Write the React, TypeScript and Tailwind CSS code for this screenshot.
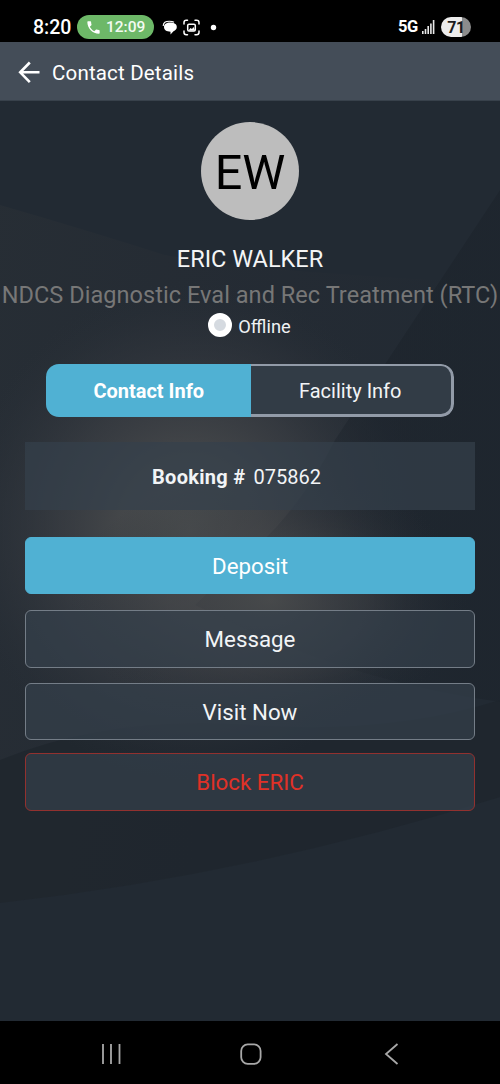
import type { ReactNode } from "react";

const StatusBar = () => {
  return (
    <div className="h-[42px] shrink-0 bg-black flex items-start pt-[15px] pl-[33px] pr-[29px] text-white">
      <div className="h-6 flex items-center w-[38px] text-[19.5px] font-medium whitespace-nowrap pt-[1px]">
        8:20
      </div>
      <div className="h-6 w-[77px] ml-[6px] rounded-full bg-[#6db868] flex items-center pl-[10px]">
        <svg className="w-[13px] h-[13px]" viewBox="2.5 2.5 19 19" fill="white">
          <path d="M6.600 10.800c1.400 2.800 3.800 5.100 6.600 6.600l2.200-2.200c.3-.3.7-.4 1-.2 1.100.4 2.300.6 3.600.6.600 0 1 .4 1 1V20c0 .6-.4 1-1 1C10.600 21 3 13.400 3 4c0-.6.4-1 1-1h3.500c.6 0 1 .4 1 1 0 1.300.2 2.500.6 3.600.1.300 0 .7-.2 1z" />
        </svg>
        <span className="ml-[6px] text-[15.5px] font-medium leading-6 text-[#f3fbf2]">12:09</span>
      </div>
      <svg className="w-[60px] h-6 ml-[7px]" viewBox="0 0 60 24" fill="none">
        {/* messages */}
        <path d="M2.200 11C2.200 7.500 4.500 6.200 8.300 6.200c2.400 0 3.700.3 4.700 1.100" stroke="white" strokeWidth="1.100" />
        <path d="M9.200 7.600c4 0 6.600 1.700 6.600 4.500 0 2-1.300 3.500-3.300 4.200L9.500 19.600v-2.900C5.500 16.700 3 15 3 12.100c0-2.800 2.400-4.500 6.200-4.500z" fill="white" />
        {/* screen capture */}
        <g stroke="white" strokeWidth="1.500" strokeLinecap="round">
          <path d="M23 9V7.500C23 6 24 5.300 25.300 5.300H26.500M34 5.300h1.600c1.500 0 2.400.8 2.400 2.200V9M38 16v1.500c0 1.500-1 2.200-2.400 2.200H34M26.500 19.700h-1.200c-1.300 0-2.300-.7-2.300-2.200V16" />
          <rect x="26.700" y="9.300" width="7.600" height="6.800" rx="1.300" />
        </g>
        <path d="M27.500 15.500l2-2.500 1.500 1 1.500-2 1.600 3.500z" fill="white" />
        <circle cx="52.500" cy="12.500" r="2.700" fill="white" />
      </svg>
      <div className="ml-auto flex items-center h-6">
        <span className="text-[16.500px] font-bold tracking-[-0.300px] pt-[1px]">5G</span>
        <svg className="w-[13px] h-[14px] ml-[4px]" viewBox="0 0 13 14" fill="#e8e8e8">
          <rect x="0" y="11" width="1.600" height="3" />
          <rect x="2.700" y="9" width="1.600" height="5" />
          <rect x="5.400" y="6" width="1.600" height="8" />
          <rect x="8.100" y="3.500" width="1.600" height="10.500" />
          <rect x="10.800" y="0" width="1.600" height="14" />
        </svg>
        <div className="ml-[6px] w-[30px] h-5 rounded-full bg-linear-to-r from-[#ececec] from-71% to-[#8c8c8c] to-71% text-center text-[16px] leading-[21px] font-bold text-[#1c1c1c] tracking-[-0.500px]">
          71
        </div>
      </div>
    </div>
  );
};

const Header = () => {
  return (
    <div className="h-[59px] shrink-0 bg-[#444d58] border-b border-[#38414b] flex items-center pl-[18px] pt-[2px] text-white">
      <svg className="w-[22px] h-[22px]" viewBox="0 0 22 22" fill="none" stroke="white" strokeWidth="2.600">
        <path d="M21.500 11.300H2.500M11.800 1.500L2.200 11.300l9.600 9.800" />
      </svg>
      <h1 className="ml-[12px] pt-[1px] text-[20.500px] leading-6 tracking-[0.180px] whitespace-nowrap">Contact Details</h1>
    </div>
  );
};

// soft glow and diagonal facets behind the page content
const Backdrop = () => {
  return (
    <svg className="absolute inset-0 w-full h-full" viewBox="0 101 500 920" preserveAspectRatio="none">
      <defs>
        <radialGradient id="glow" gradientUnits="userSpaceOnUse" cx="0" cy="0" r="1" gradientTransform="translate(190 530) scale(240 250)">
          <stop offset="0" stopColor="#4d5051" />
          <stop offset="0.300" stopColor="#494b4d" stopOpacity="0.850" />
          <stop offset="0.550" stopColor="#3e4146" stopOpacity="0.650" />
          <stop offset="0.800" stopColor="#30353c" stopOpacity="0.400" />
          <stop offset="1" stopColor="#262d35" stopOpacity="0" />
        </radialGradient>
        <radialGradient id="glowLow" gradientUnits="userSpaceOnUse" cx="0" cy="0" r="1" gradientTransform="translate(270 600) scale(200 130)">
          <stop offset="0" stopColor="#4a4c4d" stopOpacity="0.850" />
          <stop offset="0.500" stopColor="#404246" stopOpacity="0.500" />
          <stop offset="1" stopColor="#262c33" stopOpacity="0" />
        </radialGradient>
        <linearGradient id="facet" gradientUnits="userSpaceOnUse" x1="0" y1="200" x2="500" y2="280">
          <stop offset="0" stopColor="#2a3036" />
          <stop offset="0.500" stopColor="#262c34" />
          <stop offset="1" stopColor="#222a33" />
        </linearGradient>
        <linearGradient id="shade" gradientUnits="userSpaceOnUse" x1="262" y1="540" x2="420" y2="500">
          <stop offset="0" stopColor="#1c232b" stopOpacity="0.200" />
          <stop offset="1" stopColor="#1c232b" stopOpacity="0.600" />
        </linearGradient>
      </defs>
      <rect y="101" width="500" height="920" fill="#222a33" />
      <path d="M0 205Q80 228 165 255Q250 270 440 280L500 260V797Q250 875 0 903z" fill="url(#facet)" fillOpacity="0.600" />
      <path d="M0 760Q110 715 250 725T500 700V797Q250 875 0 903z" fill="#1e252c" fillOpacity="0.700" />
      <rect y="101" width="500" height="920" fill="url(#glow)" />
      <path d="M500 190L335 440Q305 500 262 542L195 605Q340 680 500 702z" fill="url(#shade)" />
      <rect y="101" width="500" height="920" fill="url(#glowLow)" />
    </svg>
  );
};

const ActionButton = ({ className, children }: { className: string; children: ReactNode }) => {
  return (
    <button className={`w-full rounded-[6px] border text-[22.300px] leading-none flex items-center justify-center pt-[1px] ${className}`}>
      {children}
    </button>
  );
};

const ContactDetails = () => {
  return (
    <div className="relative h-[920px] shrink-0 overflow-hidden">
      <Backdrop />
      <div className="relative flex flex-col items-center pt-[21px]">
        <div className="w-[98px] h-[98px] rounded-full bg-[#bdbdbd] flex items-center justify-center text-black text-[48.500px] leading-none pt-[4px]">
          EW
        </div>
        <h2 className="mt-[24px] text-[23.500px] leading-[30px] text-[#f4f5f6]">ERIC WALKER</h2>
        <p className="mt-[6px] text-[23.500px] leading-[30px] tracking-[0.050px] text-[#777777] whitespace-nowrap">
          NDCS Diagnostic Eval and Rec Treatment (RTC)
        </p>
        <div className="mt-[3px] h-6 flex items-center pr-[1px] text-[18.300px] leading-6 text-[#eff1f3]">
          <span className="w-6 h-6 rounded-full bg-[#d5dae0] border-[6px] border-white" />
          <span className="ml-[6px] pt-[3px]">Offline</span>
        </div>

        <div className="mt-[27px] w-[408px] h-[53px] flex rounded-[13px] overflow-hidden text-[20px] text-[#f2f4f6]">
          <button className="w-[204.500px] bg-[#50b1d3] font-bold text-white pt-[1px] pl-[1px]">Contact Info</button>
          <button className="flex-1 bg-[#323c46] border-y-2 border-b-[3px] border-r-[3px] border-[#929ba8] rounded-r-[13px] pr-[1px] pt-[1px]">
            Facility Info
          </button>
        </div>

        <div className="mt-[25px] w-[450px] h-[68px] bg-[#34404c]/70 flex items-center pl-[127px] pt-[2px] gap-[8px] text-[20px] text-[#f2f4f6]">
          <span className="font-bold tracking-[0.300px]">Booking #</span>
          <span>075862</span>
        </div>

        <div className="w-[450px] mt-[27px] flex flex-col">
          <ActionButton className="h-[57px] bg-[#50b1d3] border-[#50b1d3] text-white">Deposit</ActionButton>
          <ActionButton className="mt-[16px] h-[58px] bg-[#34404c]/70 border-[#747d87] text-[#f2f4f6]">Message</ActionButton>
          <ActionButton className="mt-[15px] h-[57px] bg-[#34404c]/70 border-[#747d87] text-[#f2f4f6]">Visit Now</ActionButton>
          <ActionButton className="mt-[13px] h-[58px] bg-[#34404c]/70 border-[#92312f] text-[#e03127]">Block ERIC</ActionButton>
        </div>
      </div>
    </div>
  );
};

const NavBar = () => {
  return (
    <div className="h-[63px] shrink-0 bg-black flex items-center pl-[100px] pt-[2px]">
      <svg className="w-[22px] h-[22px]" viewBox="0 0 22 22" fill="none" stroke="#a8a8a8" strokeWidth="1.800">
        <path d="M3 1v20M11 1v20M19.500 1v20" />
      </svg>
      <svg className="w-[22px] h-[22px] ml-[118px]" viewBox="0 0 22 22" fill="none" stroke="#a8a8a8" strokeWidth="1.800">
        <rect x="1.200" y="1.400" width="19.400" height="19.400" rx="6.500" />
      </svg>
      <svg className="w-[18px] h-[22px] ml-[119px]" viewBox="0 0 18 22" fill="none" stroke="#a8a8a8" strokeWidth="1.800">
        <path d="M16.500 1L5 11l11.500 10" />
      </svg>
    </div>
  );
};

const App = () => {
  return (
    <div className="w-[500px] h-[1084px] flex flex-col overflow-hidden bg-black font-[Roboto,sans-serif]">
      <StatusBar />
      <Header />
      <ContactDetails />
      <NavBar />
    </div>
  );
};

export default App;
